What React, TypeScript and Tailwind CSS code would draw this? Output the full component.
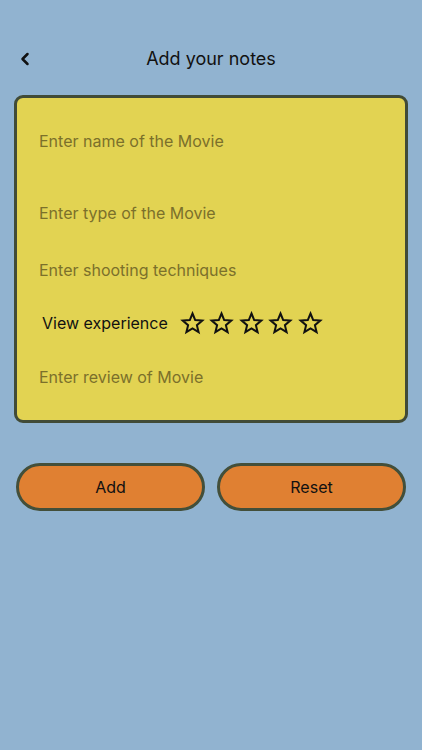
import { ChevronLeft } from "lucide-react";

const Star = () => (
  <svg width="25" height="24" viewBox="0 0 24 24" fill="none" stroke="#111" strokeWidth="2" strokeLinejoin="miter">
    <polygon points="12,2.5 14.7,9.1 21.8,9.6 16.4,14.2 18.1,21.2 12,17.4 5.9,21.2 7.6,14.2 2.2,9.6 9.3,9.1" />
  </svg>
);

const App = () => {
  const fields = ["Enter name of the Movie", "Enter type of the Movie", "Enter shooting techniques"];

  return (
    <div className="min-h-[750px] w-full bg-[#91b3d0] pt-[41px] font-['Inter','Noto_Sans',sans-serif]">
      <div className="relative flex h-[36px] items-center justify-center">
        <ChevronLeft className="absolute left-[15px] top-[8px] h-[20px] w-[20px] text-[#111]" strokeWidth={3} />
        <h1 className="text-[18px] text-[#111] leading-[36px]">Add your notes</h1>
      </div>

      <div className="mx-[14px] mt-[18px] h-[328px] rounded-[9px] border-[3px] border-[#414b37] bg-[#e2d352] px-[22px]">
        <div className="pt-[33px] text-[16px]">
          <input
            placeholder={fields[0]}
            className="block w-full bg-transparent leading-[20px] outline-none placeholder:text-[#7b702b]"
          />
          <input
            placeholder={fields[1]}
            className="mt-[52px] block w-full bg-transparent leading-[20px] outline-none placeholder:text-[#7b702b]"
          />
          <input
            placeholder={fields[2]}
            className="mt-[37px] block w-full bg-transparent leading-[20px] outline-none placeholder:text-[#7b702b]"
          />
        </div>
        <div className="mt-[31px] flex items-center">
          <span className="ml-[3px] text-[16px] text-[#111] leading-[24px]">View experience</span>
          <div className="ml-[12px] flex gap-[4.5px]">
            {[0, 1, 2, 3, 4].map((i) => (
              <Star key={i} />
            ))}
          </div>
        </div>
        <input
          placeholder="Enter review of Movie"
          className="mt-[32px] block w-full bg-transparent text-[16px] leading-[20px] outline-none placeholder:text-[#7b702b]"
        />
      </div>

      <div className="mx-[16px] mt-[40px] flex gap-[12px]">
        <button className="h-[48px] flex-1 rounded-full border-[3px] border-[#434f3a] bg-[#e08032] text-[16px] text-[#111]">
          Add
        </button>
        <button className="h-[48px] flex-1 rounded-full border-[3px] border-[#434f3a] bg-[#e08032] text-[16px] text-[#111]">
          Reset
        </button>
      </div>
    </div>
  );
};

export default App;
